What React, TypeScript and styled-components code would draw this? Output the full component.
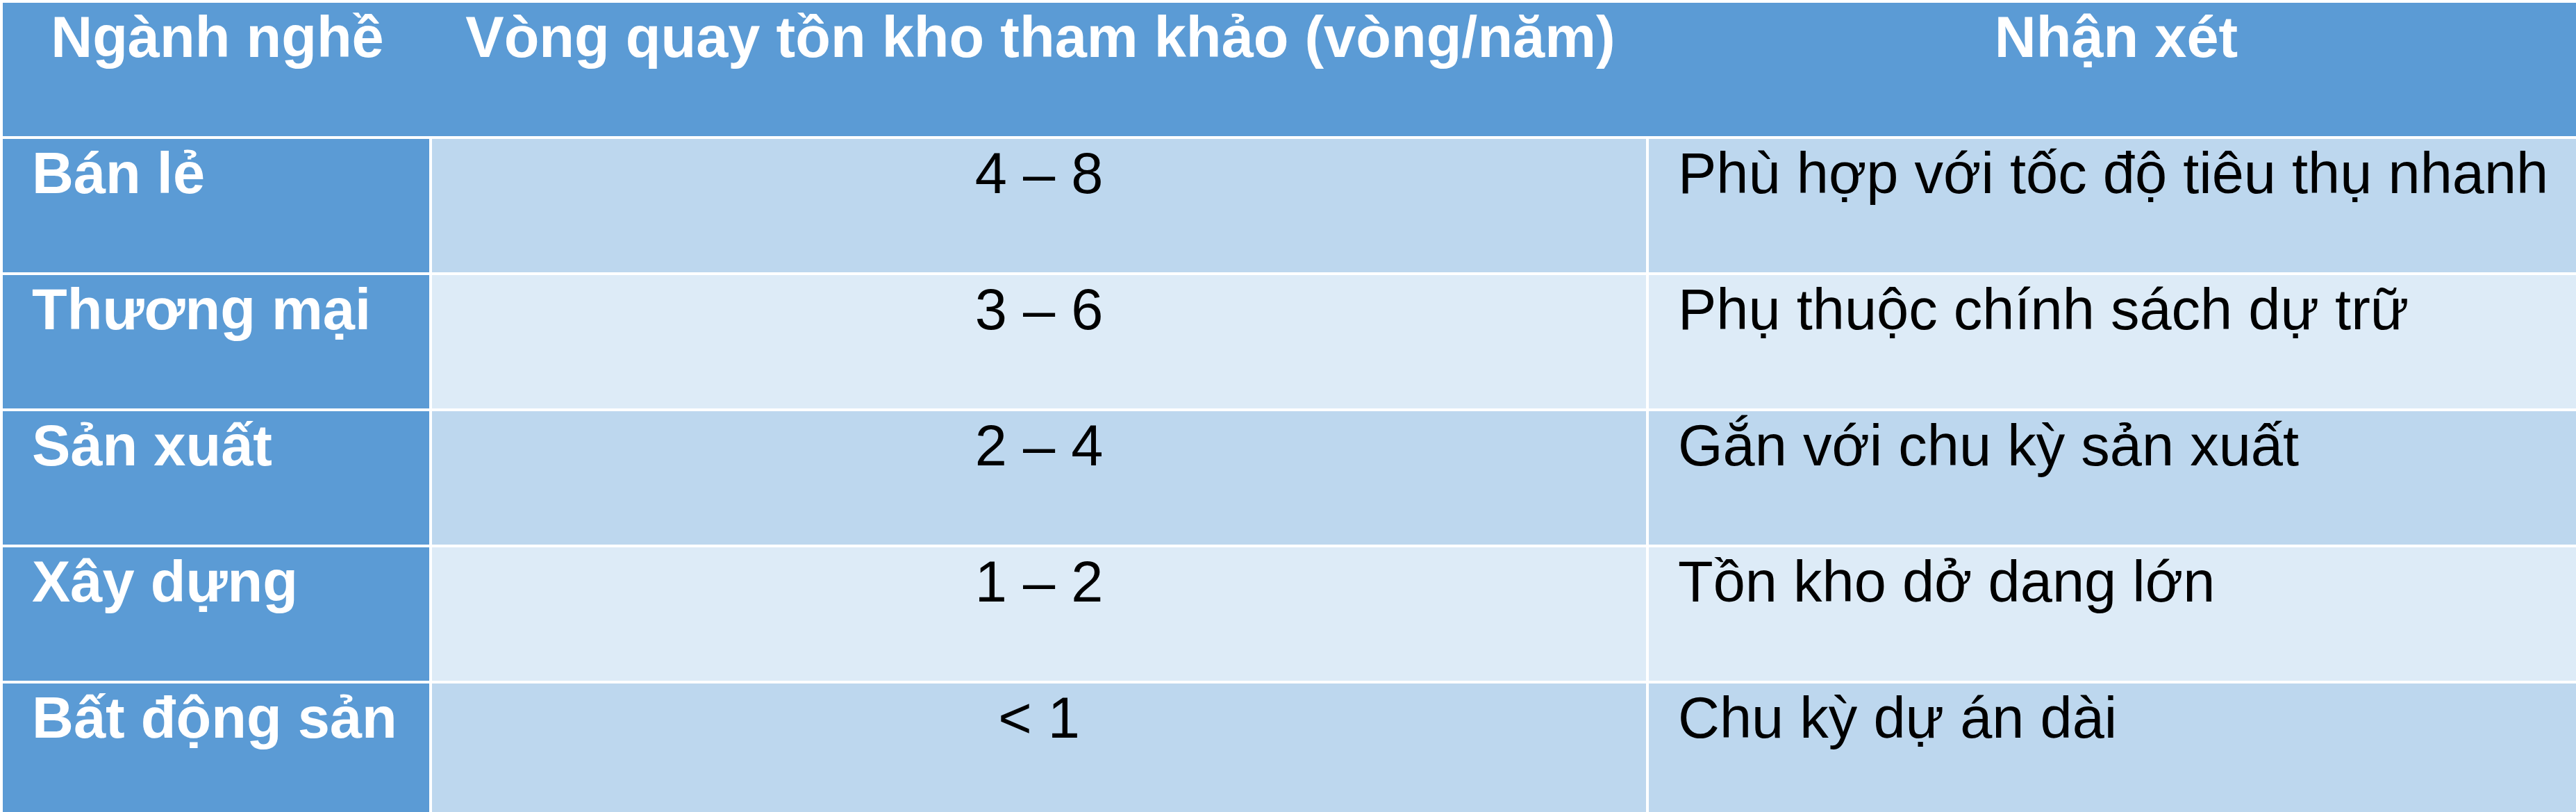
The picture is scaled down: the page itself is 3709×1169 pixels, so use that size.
import React from 'react';
import styled, { createGlobalStyle } from 'styled-components';

interface RowData {
  sector: string;
  turnover: string;
  note: string;
}

const rows: RowData[] = [
  { sector: 'Bán lẻ', turnover: '4 – 8', note: 'Phù hợp với tốc độ tiêu thụ nhanh' },
  { sector: 'Thương mại', turnover: '3 – 6', note: 'Phụ thuộc chính sách dự trữ' },
  { sector: 'Sản xuất', turnover: '2 – 4', note: 'Gắn với chu kỳ sản xuất' },
  { sector: 'Xây dựng', turnover: '1 – 2', note: 'Tồn kho dở dang lớn' },
  { sector: 'Bất động sản', turnover: '< 1', note: 'Chu kỳ dự án dài' },
];

const colors = {
  accent: '#5b9bd5',
  bandDark: '#bdd7ee',
  bandLight: '#ddebf7',
  text: '#000000',
  white: '#ffffff',
};

const GlobalStyle = createGlobalStyle`
  html, body {
    margin: 0;
    padding: 0;
    background: ${colors.white};
    overflow: hidden;
  }
`;

const Page = styled.main`
  width: 3709px;
  height: 1169px;
  overflow: hidden;
  padding: 4px 0 0 4px;
  box-sizing: border-box;
  font-family: 'Liberation Sans', Arial, sans-serif;
  font-size: 83px;
  line-height: 1.2;
`;

const Table = styled.section`
  display: flex;
  flex-direction: column;
  gap: 4px;
  width: 3716px;
`;

const Row = styled.div<{ $header?: boolean }>`
  display: grid;
  grid-template-columns: ${({ $header }) =>
    $header ? '618px 1752px 1346px' : '614px 1748px 1346px'};
  column-gap: ${({ $header }) => ($header ? 0 : 4)}px;
  height: 192px;
  background: ${({ $header }) => ($header ? colors.accent : 'transparent')};
`;

const HeadCell = styled.div`
  color: ${colors.white};
  font-weight: bold;
  text-align: center;
  white-space: nowrap;
`;

const SectorCell = styled.div`
  background: ${colors.accent};
  color: ${colors.white};
  font-weight: bold;
  padding-left: 42px;
  white-space: nowrap;
`;

const BodyCell = styled.div<{ $band: boolean; $align: 'left' | 'center' }>`
  background: ${({ $band }) => ($band ? colors.bandDark : colors.bandLight)};
  color: ${colors.text};
  text-align: ${({ $align }) => $align};
  padding-left: ${({ $align }) => ($align === 'left' ? 42 : 0)}px;
  white-space: nowrap;
`;

const App = () => (
  <>
    <GlobalStyle />
    <Page>
      <Table>
        <Row $header>
          <HeadCell>Ngành nghề</HeadCell>
          <HeadCell>Vòng quay tồn kho tham khảo (vòng/năm)</HeadCell>
          <HeadCell>Nhận xét</HeadCell>
        </Row>
        {rows.map((row, i) => (
          <Row key={row.sector}>
            <SectorCell>{row.sector}</SectorCell>
            <BodyCell $band={i % 2 === 0} $align="center">
              {row.turnover}
            </BodyCell>
            <BodyCell $band={i % 2 === 0} $align="left">
              {row.note}
            </BodyCell>
          </Row>
        ))}
      </Table>
    </Page>
  </>
);

export default App;
